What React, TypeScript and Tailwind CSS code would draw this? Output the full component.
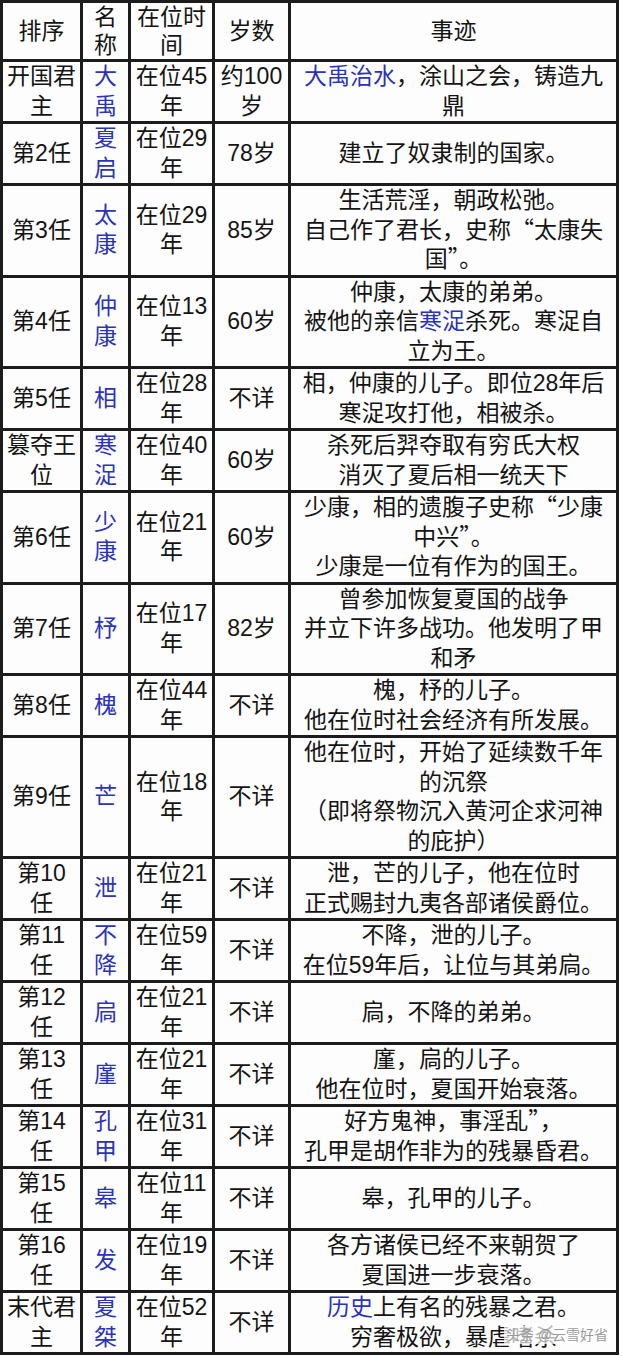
import type { ReactNode } from 'react'

// 夏朝君主一览表

type Row = {
  order: string[]
  name: string[]
  years: string
  age: string[]
  deeds: ReactNode[]
}

const Blue = ({ children }: { children: ReactNode }) => (
  <span className="text-[#2b33b8]">{children}</span>
)

// 全角引号，用中文字体画出来
const Q = ({ c }: { c: string }) => (
  <span className="leading-none" style={{ fontFamily: "'Noto Sans CJK SC', sans-serif" }}>{c}</span>
)

const rows: Row[] = [
  { order: ['开国君', '主'], name: ['大', '禹'], years: '45', age: ['约100', '岁'], deeds: [<><Blue>大禹治水</Blue>，涂山之会，铸造九</>, '鼎'] },
  { order: ['第2任'], name: ['夏', '启'], years: '29', age: ['78岁'], deeds: ['建立了奴隶制的国家。'] },
  { order: ['第3任'], name: ['太', '康'], years: '29', age: ['85岁'], deeds: ['生活荒淫，朝政松弛。', <>自己作了君长，史称<Q c="“" />太康失</>, <>国<Q c="”" />。</>] },
  { order: ['第4任'], name: ['仲', '康'], years: '13', age: ['60岁'], deeds: ['仲康，太康的弟弟。', <>被他的亲信<Blue>寒浞</Blue>杀死。寒浞自</>, '立为王。'] },
  { order: ['第5任'], name: ['相'], years: '28', age: ['不详'], deeds: ['相，仲康的儿子。即位28年后', '寒浞攻打他，相被杀。'] },
  { order: ['篡夺王', '位'], name: ['寒', '浞'], years: '40', age: ['60岁'], deeds: ['杀死后羿夺取有穷氏大权', '消灭了夏后相一统天下'] },
  { order: ['第6任'], name: ['少', '康'], years: '21', age: ['60岁'], deeds: [<>少康，相的遗腹子史称<Q c="“" />少康</>, <>中兴<Q c="”" />。</>, '少康是一位有作为的国王。'] },
  { order: ['第7任'], name: ['杼'], years: '17', age: ['82岁'], deeds: ['曾参加恢复夏国的战争', '并立下许多战功。他发明了甲', '和矛'] },
  { order: ['第8任'], name: ['槐'], years: '44', age: ['不详'], deeds: ['槐，杼的儿子。', '他在位时社会经济有所发展。'] },
  { order: ['第9任'], name: ['芒'], years: '18', age: ['不详'], deeds: ['他在位时，开始了延续数千年', '的沉祭', '（即将祭物沉入黄河企求河神', '的庇护）'] },
  { order: ['第10', '任'], name: ['泄'], years: '21', age: ['不详'], deeds: ['泄，芒的儿子，他在位时', '正式赐封九夷各部诸侯爵位。'] },
  { order: ['第11', '任'], name: ['不', '降'], years: '59', age: ['不详'], deeds: ['不降，泄的儿子。', '在位59年后，让位与其弟扃。'] },
  { order: ['第12', '任'], name: ['扃'], years: '21', age: ['不详'], deeds: ['扃，不降的弟弟。'] },
  { order: ['第13', '任'], name: ['廑'], years: '21', age: ['不详'], deeds: ['廑，扃的儿子。', '他在位时，夏国开始衰落。'] },
  { order: ['第14', '任'], name: ['孔', '甲'], years: '31', age: ['不详'], deeds: [<>好方鬼神，事淫乱<Q c="”" />，</>, '孔甲是胡作非为的残暴昏君。'] },
  { order: ['第15', '任'], name: ['皋'], years: '11', age: ['不详'], deeds: ['皋，孔甲的儿子。'] },
  { order: ['第16', '任'], name: ['发'], years: '19', age: ['不详'], deeds: ['各方诸侯已经不来朝贺了', '夏国进一步衰落。'] },
  { order: ['末代君', '主'], name: ['夏', '桀'], years: '52', age: ['不详'], deeds: [<><Blue>历史</Blue>上有名的残暴之君。</>, '穷奢极欲，暴虐嗜杀'] },
]

const cell = 'bg-[#fdfdfd] flex flex-col items-center justify-center text-center whitespace-nowrap'

function Lines({ lines, h = 'h-[29.5px]' }: { lines: ReactNode[]; h?: string }) {
  return (
    <>
      {lines.map((l, i) => (
        <span key={i} className={`block ${h}`}>{l}</span>
      ))}
    </>
  )
}

export default function App() {
  return (
    <div
      className="w-[622px] h-[1356px] bg-white text-[#141414] text-[23px]"
      style={{ fontFamily: "'Liberation Sans', 'Noto Sans CJK SC', sans-serif" }}
    >
      <div className="grid grid-cols-[77px_45px_81px_73px_325px] gap-[3px] bg-[#1c1c1c] p-[3px] w-[619px] leading-[29.5px]">
        {/* header */}
        <div className={`${cell} leading-[28px]`}>排序</div>
        <div className={`${cell} leading-[28px]`}><Lines lines={['名', '称']} h="h-[28px]" /></div>
        <div className={`${cell} leading-[28px]`}><Lines lines={['在位时', '间']} h="h-[28px]" /></div>
        <div className={`${cell} leading-[28px]`}>岁数</div>
        <div className={`${cell} leading-[28px]`}>事迹</div>

        {rows.map((r, i) => (
          <div key={i} className="contents">
            <div className={cell}><Lines lines={r.order} /></div>
            <div className={`${cell} text-[#2b33b8]`}><Lines lines={r.name} /></div>
            <div className={cell}><Lines lines={[`在位${r.years}`, '年']} /></div>
            <div className={cell}><Lines lines={r.age} /></div>
            <div className={`${cell} relative`}>
              <Lines lines={r.deeds} />
              {i === rows.length - 1 && (
                <span className="absolute right-[6px] bottom-[8px] text-[14px] leading-[18px] text-[#9a9a9a] bg-white/70 px-[2px]">
                  头条 @云雪好省
                </span>
              )}
            </div>
          </div>
        ))}
      </div>
    </div>
  )
}
